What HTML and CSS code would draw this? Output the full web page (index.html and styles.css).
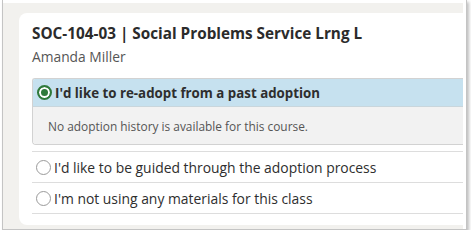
FILE: index.html
```html
<!DOCTYPE html>
<html>
<head>
    <title>Course Adoption</title>
    <meta charset="utf-8" />
    <link rel="stylesheet" href="styles.css">
</head>
<body>
    <div class="shot">
        <div class="page">
            <div class="card">
                <h2 class="course-title">SOC-104-03 | Social Problems Service Lrng L</h2>
                <div class="instructor">Amanda Miller</div>

                <div class="option-panel">
                    <label class="option option-selected">
                        <span class="radio radio-on"></span>
                        <span>I'd like to re-adopt from a past adoption</span>
                    </label>
                    <div class="option-body">No adoption history is available for this course.</div>
                </div>

                <label class="option">
                    <span class="radio"></span>
                    <span>I'd like to be guided through the adoption process</span>
                </label>
                <label class="option">
                    <span class="radio"></span>
                    <span>I'm not using any materials for this class</span>
                </label>
            </div>
        </div>
    </div>
</body>
</html>
```
FILE: styles.css
```css
body {
    margin: 0;
    background: #fff;
    font-family: "Open Sans", "Liberation Sans", sans-serif;
    color: #333;
}

.shot {
    margin-left: 2px;
    width: 465px;
    height: 230px;
    padding: 3px 3px 0 0;
    box-sizing: border-box;
    background: #fff;
    border: 1px solid #c4c4c4;
    border-top: none;
    box-shadow: 2px 2px 3px rgba(0, 0, 0, 0.25);
}

.page {
    height: 226px;
    box-sizing: border-box;
    background: #f2f1ee;
    padding: 10px 0 4px 16px;
}

.card {
    height: 100%;
    background: #fff;
    border-radius: 8px 0 0 8px;
    padding: 10px 0 0 13px;
    box-sizing: border-box;
}

.course-title {
    margin: 0;
    font-size: 15.3px;
    font-weight: 700;
    line-height: 20px;
    color: #2b2b2b;
}

.instructor {
    margin-top: 5px;
    font-size: 13.8px;
    line-height: 18px;
    color: #555;
}

.option-panel {
    margin-top: 12px;
    border: 1px solid #d2d2d2;
    border-right: none;
    border-radius: 3px 0 0 4px;
    overflow: hidden;
}

.option {
    display: flex;
    align-items: center;
    gap: 3px;
    height: 30px;
    padding-left: 4px;
    font-size: 13.9px;
    color: #2e2e2e;
    border-bottom: 1px solid #ddd;
    cursor: pointer;
}

.option-selected {
    height: 27px;
    background: #c6e1ef;
    font-size: 13.3px;
    font-weight: 700;
    border-bottom: 1px solid #c9d6dc;
}

.option-body {
    height: 37px;
    padding-left: 15px;
    display: flex;
    align-items: center;
    background: #f2f2f2;
    font-size: 11.9px;
    color: #555;
}

.option-panel + .option {
    margin-top: 6px;
    border-top: 1px solid #ddd;
}

.radio {
    width: 13px;
    height: 13px;
    border: 1px solid #9a9a9a;
    border-radius: 50%;
    background: #fff;
    flex-shrink: 0;
}

.radio-on {
    width: 11px;
    height: 11px;
    border: 2px solid #2f7a3b;
    background: #2f7a3b;
    box-shadow: inset 0 0 0 2px #fff;
}
```
